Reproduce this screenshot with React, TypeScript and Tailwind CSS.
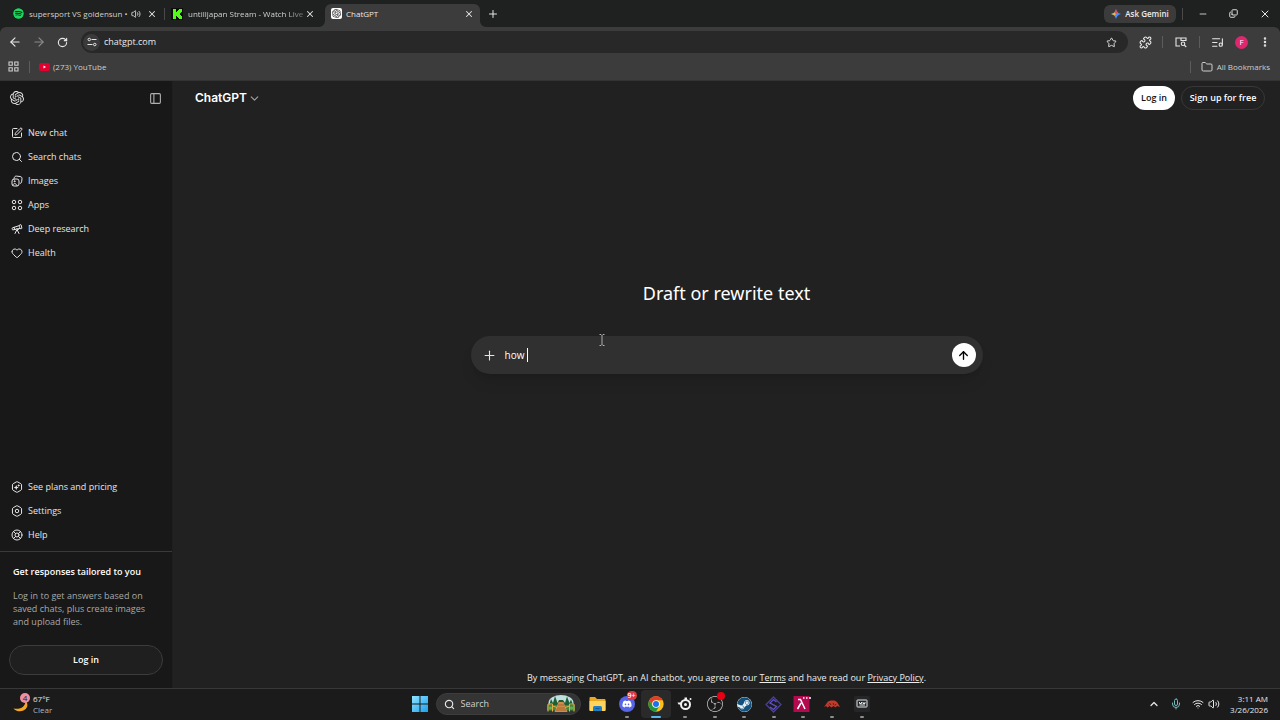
import * as React from "react";
import {
  ArrowLeft,
  ArrowRight,
  ArrowUp,
  ChevronDown,
  ChevronUp,
  Copy,
  EllipsisVertical,
  Folder,
  Heart,
  LifeBuoy,
  ListMusic,
  Mic,
  Minus,
  PanelLeft,
  Plus,
  Puzzle,
  RotateCw,
  Search,
  SquarePen,
  Star,
  Telescope,
  Volume2,
  Wifi,
  X,
} from "lucide-react";
import { FaSpotify, FaDiscord, FaSteam } from "react-icons/fa";
import { SiObsstudio, SiOpenai } from "react-icons/si";

type IconProps = { className?: string };

const ImagesIcon = ({ className }: IconProps) => (
  <svg className={className} viewBox="0 0 24 24" fill="none" stroke="currentColor" strokeWidth="2" strokeLinecap="round" strokeLinejoin="round">
    <rect x="2" y="8" width="14" height="14" rx="4" />
    <path d="M6.500 5C7.200 3 8.700 2 11 2.200l7 .8c2.700.3 4.300 2 4 4.700l-.8 6c-.2 1.600-1 2.600-2.200 3.100" />
    <circle cx="7" cy="12.500" r="1" />
    <path d="M3.500 20c2-4 6-4.500 8.500 1" />
  </svg>
);

const AppsIcon = ({ className }: IconProps) => (
  <svg className={className} viewBox="0 0 24 24" fill="none" stroke="currentColor" strokeWidth="2">
    <circle cx="6" cy="6" r="3.500" />
    <circle cx="18" cy="6" r="3.500" />
    <circle cx="6" cy="18" r="3.500" />
    <circle cx="18" cy="18" r="3.500" />
  </svg>
);

const HEXAGON = "M10.500 1.900a3 3 0 0 1 3 0l6.100 3.500a3 3 0 0 1 1.500 2.600v8a3 3 0 0 1-1.500 2.600l-6.100 3.500a3 3 0 0 1-3 0l-6.100-3.500a3 3 0 0 1-1.500-2.600V8a3 3 0 0 1 1.500-2.600z";

const PlansIcon = ({ className }: IconProps) => (
  <svg className={className} viewBox="0 0 24 24" fill="none" stroke="currentColor" strokeWidth="2">
    <path d={HEXAGON} />
    <path d="M10.500 8l1.500 3.500 3.500 1.500-3.500 1.500-1.500 3.500-1.500-3.500L5.500 13 9 11.500zM15.500 6l.9 2.100 2.100.9-2.100.9-.9 2.100-.9-2.100-2.100-.9 2.100-.9z" fill="currentColor" stroke="none" />
  </svg>
);

const GearIcon = ({ className }: IconProps) => (
  <svg className={className} viewBox="0 0 24 24" fill="none" stroke="currentColor" strokeWidth="2">
    <path d={HEXAGON} />
    <circle cx="12" cy="12" r="3.500" />
  </svg>
);

const KickIcon = () => (
  <svg className="size-3 shrink-0" viewBox="0 0 24 24">
    <rect width="24" height="24" fill="#0b0e0b" />
    <path d="M4 2h6v6h2V6h2V4h2V2h6v6h-2v2h-2v4h2v2h2v6h-6v-2h-2v-2h-2v-2h-2v6H4z" fill="#53fc18" />
  </svg>
);

const YoutubeIcon = () => (
  <svg className="h-2 w-[11px] shrink-0" viewBox="0 0 22 16">
    <rect width="22" height="16" rx="4" fill="#e3002f" />
    <path d="M9 5v6l5-3z" fill="#fff" />
  </svg>
);

const GeminiIcon = () => (
  <svg className="size-[10px]" viewBox="0 0 24 24">
    <defs>
      <linearGradient id="gemini" x1="0" y1="1" x2="1" y2="0">
        <stop offset="0" stopColor="#34b56a" />
        <stop offset="0.350" stopColor="#4f94f5" />
        <stop offset="1" stopColor="#3b7df0" />
      </linearGradient>
    </defs>
    <path d="M12 0c1.500 6 5 10.500 12 12-7 1.500-10.500 6-12 12C10.500 18 7 13.500 0 12 7 10.500 10.500 6 12 0z" fill="url(#gemini)" />
    <path d="M12 0c1 4 2.500 6.500 4.500 8.500L12 12 8 8.500c2-2 3-4.500 4-8.500z" fill="#ef4b4b" />
    <path d="M0 12c4-.8 6.500-2 8.500-3.800L12 12l-3.500 3.800C6.500 14 4 12.800 0 12z" fill="#f0b93a" />
  </svg>
);

const TuneIcon = () => (
  <svg className="size-[10px]" viewBox="0 0 20 20" fill="none" stroke="currentColor" strokeWidth="2">
    <circle cx="4.500" cy="5" r="2.500" />
    <path d="M9 5h10M1 15h10" />
    <circle cx="15.500" cy="15" r="2.500" />
  </svg>
);

const LensIcon = () => (
  <svg className="size-3" viewBox="0 0 24 24" fill="none" stroke="currentColor" strokeWidth="2.200">
    <path d="M10 20H2V4h20v6M12 4v5h10" />
    <circle cx="16" cy="15.500" r="3.500" />
    <path d="M18.500 18l4 4" />
  </svg>
);

const GridIcon = () => (
  <svg className="size-[11px]" viewBox="0 0 22 22" fill="none" stroke="currentColor" strokeWidth="2.200">
    <path d="M2 2h6.500v6.500H2zM13.500 2H20v6.500h-6.500zM2 13.500h6.500V20H2zM13.500 13.500H20V20h-6.500z" />
  </svg>
);

const WindowsIcon = () => (
  <svg className="size-4" viewBox="0 0 32 32">
    <defs>
      <linearGradient id="win" x1="0" y1="0" x2="1" y2="1">
        <stop offset="0" stopColor="#8fe3ff" />
        <stop offset="1" stopColor="#1ba0ee" />
      </linearGradient>
    </defs>
    <path d="M0 0h15v15H0zM17 0h15v15H17zM0 17h15v15H0zM17 17h15v15H17z" fill="url(#win)" />
  </svg>
);

const ParkArt = () => (
  <svg className="h-[18px] w-[30px]" viewBox="0 0 60 36">
    <ellipse cx="30" cy="16" rx="25" ry="16" fill="#bfe0de" />
    <path d="M6 22l4-14 4 8 4-14 5 14 3-6h8l4 6 4-13 5 13 3-7 5 13z" fill="#1f5f35" />
    <path d="M2 20h56v11H2z" fill="#3f8a3c" />
    <path d="M25 14h10l8 20H17z" fill="#d08b4a" />
    <path d="M22 26h16M20 30h20M24 20h12" stroke="#9a5c28" strokeWidth="1.500" />
    <path d="M4 33V18h9v15M47 33V18h9v15M13 22l9 3M47 22l-9 3" fill="none" stroke="#e2b04a" strokeWidth="2" />
    <circle cx="9" cy="26" r="3" fill="#67b34a" />
    <circle cx="51" cy="26" r="3" fill="#67b34a" />
  </svg>
);

const ExplorerIcon = () => (
  <svg className="h-4 w-[17px]" viewBox="0 0 34 32">
    <path d="M1 4a2 2 0 0 1 2-2h9l4 4h15a2 2 0 0 1 2 2v20a2 2 0 0 1-2 2H3a2 2 0 0 1-2-2z" fill="#e9a820" />
    <path d="M1 10h32v18a2 2 0 0 1-2 2H3a2 2 0 0 1-2-2z" fill="#ffd45c" />
    <path d="M8 30v-7a3 3 0 0 1 3-3h12a3 3 0 0 1 3 3v7z" fill="#1f7fc4" />
    <path d="M13 25h8" stroke="#105a94" strokeWidth="2" />
  </svg>
);

const ChromeIcon = () => (
  <svg className="size-4" viewBox="0 0 48 48">
    <circle cx="24" cy="24" r="23" fill="#fbc116" />
    <path d="M4.100 12.500A23 23 0 0 1 43.900 12.500H24L14 29.700z" fill="#e33b2e" />
    <path d="M4.100 12.500A23 23 0 0 0 24 47l10-17.200L14 29.700z" fill="#229342" />
    <circle cx="24" cy="24" r="11.500" fill="#fff" />
    <circle cx="24" cy="24" r="9" fill="#1a73e8" />
  </svg>
);

const SteelSeriesIcon = () => (
  <svg className="size-4" viewBox="0 0 32 32" fill="none" stroke="#f2f2f2">
    <circle cx="17" cy="17" r="9" strokeWidth="4" />
    <circle cx="17" cy="17" r="3" fill="#f2f2f2" stroke="none" />
    <path d="M15 3h5v5h-5zM1 13h8v4H3z" fill="#f2f2f2" stroke="none" />
    <circle cx="27" cy="6" r="2" fill="#f2f2f2" stroke="none" />
  </svg>
);

const DiamondIcon = () => (
  <svg className="size-[17px]" viewBox="0 0 34 34" fill="none" stroke="#4b3f9c" strokeWidth="2.500">
    <path d="M17 2l15 15-15 15L2 17z" />
    <path d="M23 12l-6-5-7 7 13 7-6 6-7-5" stroke="#6253c4" />
  </svg>
);

const LambdaIcon = () => (
  <svg className="h-4 w-[19px]" viewBox="0 0 38 32">
    <path d="M1 0h32v32H1z" fill="#b3094f" />
    <path d="M10 7h5l9 19M16 14L9 26" fill="none" stroke="#fff" strokeWidth="3" />
    <path d="M20 4h3M26 4h3M32 4h4" stroke="#fff" strokeWidth="3" />
  </svg>
);

const RedMaskIcon = () => (
  <svg className="h-2 w-4" viewBox="0 0 32 16">
    <path d="M0 14l8-11 5-2h8l5 3 6 10-6-2-3 3-4-3-4 3-4-3-4 3-3-3z" fill="#c23a2c" />
    <path d="M11 6l3 4M18 6l2 4M8 9l2 2M24 8l-2 3" stroke="#481410" strokeWidth="1.500" />
  </svg>
);

const ScreenIcon = () => (
  <svg className="size-4" viewBox="0 0 32 32">
    <rect width="32" height="32" rx="3" fill="#242628" />
    <rect x="6" y="8" width="20" height="14" rx="1" fill="none" stroke="#e6e6e6" strokeWidth="2" />
    <path d="M11 12v3h4v-3M18 12v3h4v-3M11 18h11" fill="none" stroke="#e6e6e6" strokeWidth="2" />
  </svg>
);

const Separator = () => <span className="h-3 w-px shrink-0 bg-[#5c5c5c]" />;

const NAV_ITEMS = [
  { label: "New chat", icon: SquarePen },
  { label: "Search chats", icon: Search },
  { label: "Images", icon: ImagesIcon },
  { label: "Apps", icon: AppsIcon },
  { label: "Deep research", icon: Telescope },
  { label: "Health", icon: Heart },
];

const FOOTER_ITEMS = [
  { label: "See plans and pricing", icon: PlansIcon },
  { label: "Settings", icon: GearIcon },
  { label: "Help", icon: LifeBuoy },
];

const TASKBAR_APPS = [
  { name: "File Explorer", icon: <ExplorerIcon />, open: false },
  {
    name: "Discord",
    icon: (
      <span className="relative flex size-4 items-center justify-center rounded-full bg-[#5765e8]">
        <FaDiscord className="size-[10px] text-white" />
        <span className="absolute -top-[5px] left-2 flex h-[9px] min-w-[10px] items-center justify-center rounded-full bg-[#d93a41] text-[7px] font-semibold leading-none text-white">9+</span>
      </span>
    ),
    open: true,
  },
  { name: "Chrome", icon: <ChromeIcon />, open: true, active: true },
  { name: "SteelSeries GG", icon: <SteelSeriesIcon />, open: true },
  {
    name: "OBS Studio",
    icon: (
      <span className="relative">
        <SiObsstudio className="size-4 text-[#c9c9c9]" />
        <span className="absolute -top-1 left-2.5 size-2 rounded-full bg-[#e60012]" />
      </span>
    ),
    open: true,
  },
  { name: "Steam", icon: <FaSteam className="size-[15px] rounded-full bg-[#e9f2f8] text-[#12517e]" />, open: true },
  { name: "Streamlabs", icon: <DiamondIcon />, open: true },
  { name: "Lambda", icon: <LambdaIcon />, open: true },
  { name: "Game", icon: <RedMaskIcon />, open: true },
  { name: "Capture", icon: <ScreenIcon />, open: true },
];

function CloseTab() {
  return (
    <button aria-label="Close tab" className="ml-auto">
      <X className="size-[10px]" strokeWidth={2.5} />
    </button>
  );
}

function TabStrip() {
  return (
    <header className="flex h-[27px] items-center bg-[#1f2020] pl-[13px] text-[8px]">
      <div className="flex w-[144px] items-center">
        <FaSpotify className="size-[11px] shrink-0 rounded-full bg-[#10241a] text-[#1ed760]" />
        <span className="ml-[5px] whitespace-nowrap text-[#d0d0d0]">supersport VS goldensun •</span>
        <Volume2 className="ml-auto size-[10px] shrink-0" />
        <span className="ml-[6px] flex"><CloseTab /></span>
      </div>
      <span className="ml-[7px] h-3 w-px bg-[#4a4a4a]" />
      <div className="ml-[6px] flex w-[144px] items-center">
        <KickIcon />
        <span className="ml-[5px] whitespace-nowrap text-[#d0d0d0] [mask-image:linear-gradient(to_right,black_85%,#0006)]">untilljapan Stream - Watch Live</span>
        <CloseTab />
      </div>
      <div className="relative ml-[10px] flex h-[23px] w-[155px] items-center self-end rounded-t-md bg-[#3c3c3c] px-[6px] pb-1">
        <svg className="absolute -left-[6px] bottom-0 size-[6px]" viewBox="0 0 6 6" fill="#3c3c3c"><path d="M6 0v6H0a6 6 0 0 0 6-6z" /></svg>
        <svg className="absolute -right-[6px] bottom-0 size-[6px]" viewBox="0 0 6 6" fill="#3c3c3c"><path d="M0 0v6h6a6 6 0 0 1-6-6z" /></svg>
        <span className="flex size-[11px] items-center justify-center rounded-[2px] bg-white text-[#222]">
          <SiOpenai className="size-[9px]" />
        </span>
        <span className="ml-1 text-[#e8e8e8]">ChatGPT</span>
        <CloseTab />
      </div>
      <button aria-label="New tab" className="ml-[7px]">
        <Plus className="size-3" />
      </button>
      <button className="ml-auto flex h-[18px] w-[72px] items-center justify-center gap-1 rounded-md bg-[#3b3b3b] font-semibold text-[#ececec]">
        <GeminiIcon />
        Ask Gemini
      </button>
      <span className="ml-[6px] h-3 w-px bg-[#4a4a4a]" />
      <div className="ml-1 flex">
        <button aria-label="Minimize" className="flex w-[31px] items-center justify-center"><Minus className="size-[10px]" /></button>
        <button aria-label="Restore" className="flex w-[31px] items-center justify-center"><Copy className="size-[9px] -rotate-90" strokeWidth={2.5} /></button>
        <button aria-label="Close window" className="flex w-[31px] items-center justify-center"><X className="size-3" /></button>
      </div>
    </header>
  );
}

function Toolbar() {
  return (
    <div className="bg-[#1f2020]">
      <div className="rounded-t-md bg-[#3c3c3c]">
        <div className="flex h-[30px] items-center pl-2 pr-[9px]">
          <button aria-label="Back"><ArrowLeft className="size-[14px]" /></button>
          <button aria-label="Forward" className="ml-[10px] text-[#8a8a8a]"><ArrowRight className="size-[14px]" /></button>
          <button aria-label="Reload" className="ml-[11px]"><RotateCw className="size-[11px]" strokeWidth={2.5} /></button>
          <div className="ml-[13px] flex h-[22px] flex-1 items-center rounded-full bg-[#282828] pl-0.5 pr-[11px]">
            <span className="flex size-[17px] items-center justify-center rounded-full bg-[#3a3a3a]"><TuneIcon /></span>
            <input aria-label="Address" defaultValue="chatgpt.com" className="ml-1 min-w-0 flex-1 bg-transparent text-[9px] text-[#e8e8e8] outline-none" />
            <button aria-label="Bookmark this page"><Star className="size-[11px]" /></button>
          </div>
          <button aria-label="Extensions" className="ml-[11px]"><Puzzle className="size-[13px]" /></button>
          <span className="ml-[10px] flex"><Separator /></span>
          <button aria-label="Search with Lens" className="ml-3"><LensIcon /></button>
          <span className="ml-3 flex"><Separator /></span>
          <button aria-label="Media" className="ml-[11px]"><ListMusic className="size-[13px]" /></button>
          <button aria-label="Profile" className="ml-[11px] flex size-[13px] items-center justify-center rounded-full bg-[#e0266f] text-[8px] text-white">F</button>
          <button aria-label="Menu" className="ml-[11px]"><EllipsisVertical className="size-3" strokeWidth={3} /></button>
        </div>
        <div className="flex h-6 items-center border-b border-[#333] pb-1 pl-2 pr-[10px] text-[8px] text-[#cfcfcf]">
          <button aria-label="Apps"><GridIcon /></button>
          <span className="ml-[10px] flex"><Separator /></span>
          <a href="#youtube" className="ml-[9px] flex items-center gap-[3px]">
            <YoutubeIcon />
            (273) YouTube
          </a>
          <span className="ml-auto flex"><Separator /></span>
          <button className="ml-[10px] flex items-center gap-1">
            <Folder className="size-3" />
            All Bookmarks
          </button>
        </div>
      </div>
    </div>
  );
}

function Sidebar() {
  return (
    <aside className="flex w-[173px] shrink-0 flex-col border-r border-[#1f1f1f] bg-[#181818]">
      <div className="flex h-[34px] items-center justify-between px-[10px]">
        <a href="#home" aria-label="ChatGPT home"><SiOpenai className="size-[14px]" /></a>
        <button aria-label="Close sidebar" className="text-[#b0b0b0]"><PanelLeft className="size-[13px]" /></button>
      </div>
      <nav className="flex flex-col pt-[6px] text-[9px] font-medium">
        {NAV_ITEMS.map(({ label, icon: Icon }) => (
          <a key={label} href="#chat" className="flex h-6 items-center gap-[5px] pl-[11px]">
            <Icon className="size-3" />
            {label}
          </a>
        ))}
      </nav>
      <nav className="mt-auto flex flex-col pb-1 text-[9px] font-medium">
        {FOOTER_ITEMS.map(({ label, icon: Icon }) => (
          <a key={label} href="#more" className="flex h-6 items-center gap-[5px] pl-[11px]">
            <Icon className="size-3" />
            {label}
          </a>
        ))}
      </nav>
      <div className="border-t border-[#3a3a3a] px-[9px] py-[13px] text-[9px]">
        <p className="pl-1 font-semibold leading-[14px] text-white">Get responses tailored to you</p>
        <p className="mt-[10px] pl-1 leading-[13px] text-[#a8a8a8]">Log in to get answers based on saved chats, plus create images and upload files.</p>
        <button className="mt-[17px] h-[30px] w-full rounded-full border border-[#3a3d3c] bg-[#1f1f1f] font-semibold text-white">Log in</button>
      </div>
    </aside>
  );
}

function Chat() {
  const [prompt, setPrompt] = React.useState("how ");

  return (
    <main className="flex flex-1 flex-col bg-[#212121]">
      <div className="flex h-[34px] items-center pl-[22px] pr-[15px] text-[9px] font-semibold">
        <button className="flex items-center gap-px font-['Inter',sans-serif] text-[12px] text-white">
          ChatGPT
          <ChevronDown className="size-[13px] text-[#a5a5a5]" />
        </button>
        <button className="ml-auto h-6 w-[42px] rounded-full bg-white text-[#111]">Log in</button>
        <button className="ml-[6px] h-6 w-[84px] rounded-full border border-[#383838] text-white">Sign up for free</button>
      </div>

      <div className="flex flex-1 flex-col items-center pt-[164px]">
        <h1 className="font-['Noto_Sans',sans-serif] text-[18px] leading-7 text-white">Draft or rewrite text</h1>
        <form className="relative mt-[29px] flex h-[38px] w-full max-w-[512px] items-center rounded-full bg-[#303030] pl-[11px] pr-[7px] shadow-lg">
          <button type="button" aria-label="Add files"><Plus className="size-[15px]" strokeWidth={1.75} /></button>
          <input
            aria-label="Message"
            value={prompt}
            onChange={(e) => setPrompt(e.target.value)}
            className="ml-2 field-sizing-content whitespace-pre bg-transparent text-[10px] font-medium text-white caret-transparent outline-none"
          />
          <span className="h-[14px] w-px bg-white" />
          <button type="submit" aria-label="Send" className="ml-auto flex size-6 items-center justify-center rounded-full bg-white text-black">
            <ArrowUp className="size-[13px]" strokeWidth={2.5} />
          </button>
          {/* mouse pointer over the composer */}
          <svg className="absolute -top-[2px] left-32 h-3 w-[6px]" viewBox="0 0 12 24" fill="none" stroke="#d5d5d5" strokeWidth="1.500">
            <path d="M1 1h3l2 2 2-2h3M6 3v18M1 23h3l2-2 2 2h3" />
          </svg>
        </form>
      </div>

      <p className="pb-[3px] text-center text-[9px] leading-[14px] text-[#ededed]">
        By messaging ChatGPT, an AI chatbot, you agree to our <a href="#terms" className="underline">Terms</a> and have read our <a href="#privacy" className="underline">Privacy Policy</a>.
      </p>
    </main>
  );
}

function Taskbar() {
  return (
    <footer className="grid h-8 grid-cols-[1fr_auto_1fr] items-center border-t border-[#383838] bg-[#1b1b1b] pb-px text-[8px]">
      <button className="flex items-center gap-1 pl-[13px] text-left leading-[11px]">
        <span className="relative size-4">
          <svg className="size-4" viewBox="0 0 32 32"><path d="M24 8c3 10-6 20-23 17 6 8 22 8 27-3 2-5 0-11-4-14z" fill="#f5a623" /></svg>
          <span className="absolute -top-[3px] left-[7px] flex size-[10px] items-center justify-center rounded-full bg-[#f08fa0] text-[8px] leading-none text-[#222]">4</span>
        </span>
        <span>
          67°F
          <span className="block text-[#b5b5b5]">Clear</span>
        </span>
      </button>
      <div className="flex items-center">
        <button aria-label="Start" className="flex w-8 justify-center"><WindowsIcon /></button>
        <label className="flex h-[22px] w-[145px] items-center rounded-full border border-[#3d3d3d] bg-[#343434] pl-[7px] pr-1">
          <Search className="size-[11px]" strokeWidth={2.5} />
          <input aria-label="Search" placeholder="Search" className="ml-[6px] w-0 min-w-0 flex-1 bg-transparent text-[9px] outline-none placeholder:text-[#cfcfcf]" />
          <ParkArt />
        </label>
        <div className="ml-0.5 grid w-[294px] grid-cols-10">
          {TASKBAR_APPS.map((app) => (
            <button
              key={app.name}
              aria-label={app.name}
              className={"relative flex h-7 items-center justify-center rounded " + (app.active ? "bg-[#2a2a2a]" : "")}
            >
              {app.icon}
              {app.open && (
                <span className={"absolute bottom-0 h-0.5 rounded-full " + (app.active ? "w-[10px] bg-[#5cb8ea]" : "w-1 bg-[#8f8f8f]")} />
              )}
            </button>
          ))}
        </div>
      </div>
      <div className="flex items-center justify-end pr-3">
        <ChevronUp className="size-3" strokeWidth={2.5} />
        <Mic className="ml-[10px] size-3 text-[#74b9bb]" />
        <Wifi className="ml-[10px] size-3" />
        <Volume2 className="ml-1 size-3" />
        <p className="ml-[10px] text-right leading-[11px]">
          3:11 AM
          <br />
          3/26/2026
        </p>
      </div>
    </footer>
  );
}

export default function App() {
  return (
    <div className="flex min-h-screen flex-col bg-[#212121] font-['Open_Sans',sans-serif] text-[#e6e6e6]">
      <TabStrip />
      <Toolbar />
      <div className="flex flex-1">
        <Sidebar />
        <Chat />
      </div>
      <Taskbar />
    </div>
  );
}
